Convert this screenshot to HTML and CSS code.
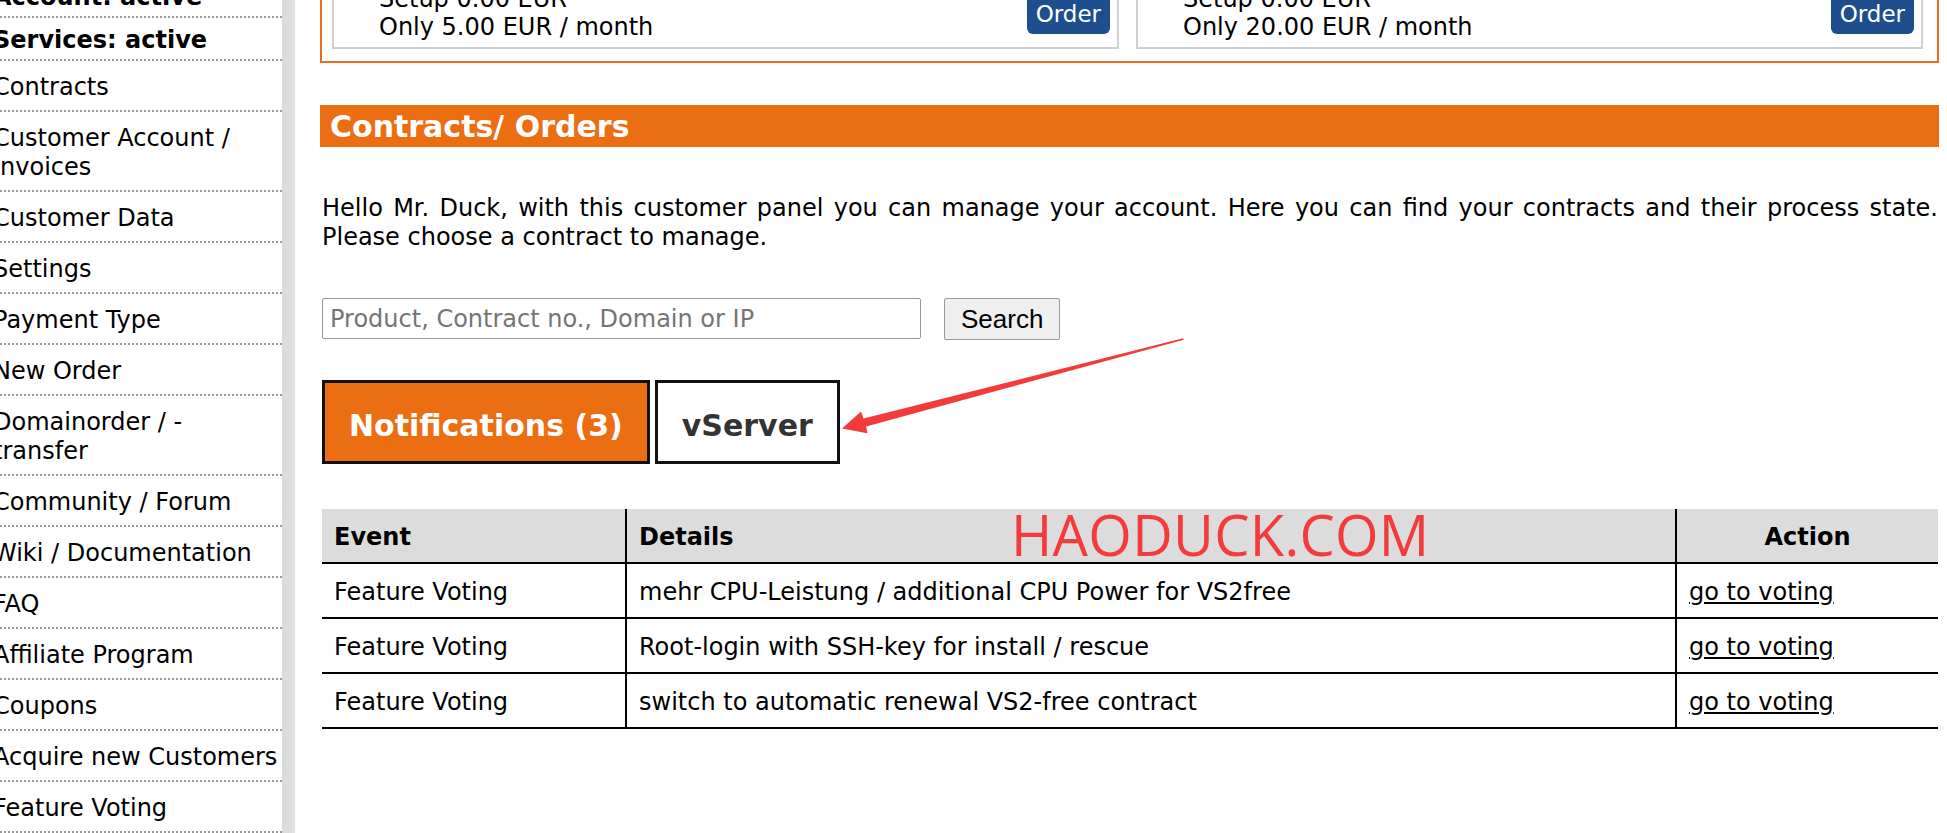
FILE: index.html
```html
<!DOCTYPE html>
<html lang="en">
<head>
<meta charset="utf-8">
<title>Contracts / Orders</title>
<link rel="stylesheet" href="styles.css">
</head>
<body>
<div class="page">
  <aside class="sidebar">
    <ul class="nav">
      <li class="nav-item status">Account: active</li>
      <li class="nav-item status">Services: active</li>
      <li class="nav-item">Contracts</li>
      <li class="nav-item">Customer Account /<br>Invoices</li>
      <li class="nav-item">Customer Data</li>
      <li class="nav-item">Settings</li>
      <li class="nav-item">Payment Type</li>
      <li class="nav-item">New Order</li>
      <li class="nav-item">Domainorder / -<br>transfer</li>
      <li class="nav-item">Community / Forum</li>
      <li class="nav-item">Wiki / Documentation</li>
      <li class="nav-item">FAQ</li>
      <li class="nav-item">Affiliate Program</li>
      <li class="nav-item">Coupons</li>
      <li class="nav-item">Acquire new Customers</li>
      <li class="nav-item">Feature Voting</li>
    </ul>
  </aside>
  <div class="gutter"></div>
  <main class="main">
    <div class="offers">
      <div class="offer">
        <div class="offer-text">Setup 0.00 EUR<br>Only 5.00 EUR / month</div>
        <button class="order-btn">Order</button>
      </div>
      <div class="offer">
        <div class="offer-text">Setup 0.00 EUR<br>Only 20.00 EUR / month</div>
        <button class="order-btn">Order</button>
      </div>
    </div>

    <h2 class="section-title">Contracts/ Orders</h2>

    <div class="content">
      <p class="intro">Hello Mr. Duck, with this customer panel you can manage your account. Here you can find your contracts and their process state. Please choose a contract to manage.</p>

      <form class="search">
        <input class="search-input" type="text" placeholder="Product, Contract no., Domain or IP">
        <button class="search-btn" type="button">Search</button>
      </form>

      <div class="tabs">
        <div class="tab active">Notifications (3)</div>
        <div class="tab">vServer</div>
      </div>

      <table class="table">
        <colgroup>
          <col class="col-event">
          <col class="col-details">
          <col class="col-action">
        </colgroup>
        <thead>
          <tr><th>Event</th><th>Details</th><th class="action">Action</th></tr>
        </thead>
        <tbody>
          <tr><td>Feature Voting</td><td>mehr CPU-Leistung / additional CPU Power for VS2free</td><td><a href="#">go to voting</a></td></tr>
          <tr><td>Feature Voting</td><td>Root-login with SSH-key for install / rescue</td><td><a href="#">go to voting</a></td></tr>
          <tr><td>Feature Voting</td><td>switch to automatic renewal VS2-free contract</td><td><a href="#">go to voting</a></td></tr>
        </tbody>
      </table>
    </div>
  </main>
</div>

<div class="watermark">HAODUCK.COM</div>
<svg class="arrow" width="1947" height="833" viewBox="0 0 1947 833" xmlns="http://www.w3.org/2000/svg">
  <path d="M842 428.5 L861 411.5 L863.5 418.6 L1183 338.2 L1183.8 339.8 L866.2 426.4 L867.4 433.2 Z" fill="#f23b3b"/>
</svg>
</body>
</html>
```

FILE: styles.css
```css
* { box-sizing: border-box; }

html, body {
  margin: 0;
  padding: 0;
}

body {
  font-family: "DejaVu Sans", Verdana, sans-serif;
  font-size: 24px;
  color: #000;
  background: #fff;
  width: 1947px;
  height: 833px;
  overflow: hidden;
}

.page {
  display: flex;
  align-items: stretch;
  height: 833px;
}

/* Sidebar */
.sidebar {
  flex: none;
  width: 290px;
  margin-left: -8px;
  margin-top: -25px;
}

.nav {
  list-style: none;
  margin: 0;
  padding: 0;
}

.nav-item {
  border-bottom: 2px dotted #999;
  padding: 12px 0 8px 1px;
  line-height: 29px;
  white-space: nowrap;
}

.nav-item.status {
  font-weight: bold;
  padding: 8px 0 4px 1px;
}

.gutter {
  flex: none;
  width: 13px;
  background: linear-gradient(to right, #d9d9d9, #e3e3e3);
}

/* Main */
.main {
  flex: 1;
  min-width: 0;
  margin-left: 25px;
  margin-right: 8px;
  margin-top: -40px;
}

.offers {
  display: flex;
  gap: 17px;
  border: 2px solid #ec6e13;
  padding: 10px 14px 12px 10px;
}

.offer {
  flex: 1;
  display: flex;
  justify-content: space-between;
  align-items: flex-end;
  border: 2px solid #d0d0d0;
  padding: 11px 7px 6px 45px;
}

.offer-text {
  line-height: 28px;
}

.order-btn {
  font-family: "DejaVu Sans", Verdana, sans-serif;
  font-size: 23px;
  line-height: 27px;
  color: #fff;
  background: #1f4e8e;
  border: none;
  border-radius: 6px;
  padding: 8px 9px 6px;
  margin-bottom: 7px;
}

.section-title {
  margin: 42px 0 0;
  height: 42px;
  background: #ec6e13;
  color: #fff;
  font-size: 30px;
  font-weight: bold;
  line-height: 41px;
  padding: 1px 0 0 10px;
}

.content {
  padding: 0 1px 0 2px;
}

.intro {
  margin: 47px 0 0;
  line-height: 29px;
  text-align: justify;
}

.search {
  display: flex;
  align-items: flex-start;
  gap: 23px;
  margin: 46px 0 0;
}

.search-input {
  width: 599px;
  height: 41px;
  border: 1px solid #999;
  border-radius: 2px;
  padding: 1px 7px 0;
  font-family: "DejaVu Sans", Verdana, sans-serif;
  font-size: 24px;
  color: #000;
}

.search-input::placeholder {
  color: #757575;
}

.search-btn {
  height: 42px;
  padding: 0 16px;
  font-family: "Liberation Sans", Arial, sans-serif;
  font-size: 26px;
  color: #000;
  background: #efefef;
  border: 1px solid #999;
  border-radius: 2px;
}

.tabs {
  display: flex;
  gap: 5px;
  margin-top: 40px;
}

.tab {
  border: 3px solid #111;
  font-size: 30px;
  font-weight: bold;
  line-height: 35px;
  padding: 25px 24px 18px;
  color: #333;
  background: #fff;
}

.tab.active {
  background: #ec6e13;
  color: #fff;
}

.table {
  width: 100%;
  margin-top: 45px;
  border-collapse: collapse;
  table-layout: fixed;
}

.col-event { width: 304px; }
.col-details { width: 1050px; }
.col-action { width: 262px; }

.table th,
.table td {
  padding: 14px 12px 10px;
  line-height: 29px;
  text-align: left;
  font-size: 24px;
  border-bottom: 2px solid #000;
  white-space: nowrap;
}

.table th {
  background: #dcdcdc;
  font-weight: bold;
}

.table th + th,
.table td + td {
  border-left: 2px solid #000;
}

.table th.action {
  text-align: center;
}

.table a {
  color: #000;
  text-decoration: underline;
}

/* Overlays */
.watermark {
  position: absolute;
  left: 1011px;
  top: 506px;
  font-family: "Open Sans", sans-serif;
  font-weight: 400;
  font-size: 56px;
  line-height: 56px;
  letter-spacing: 0.3px;
  color: #f43b3b;
  pointer-events: none;
}

.arrow {
  position: absolute;
  left: 0;
  top: 0;
  pointer-events: none;
}
```
